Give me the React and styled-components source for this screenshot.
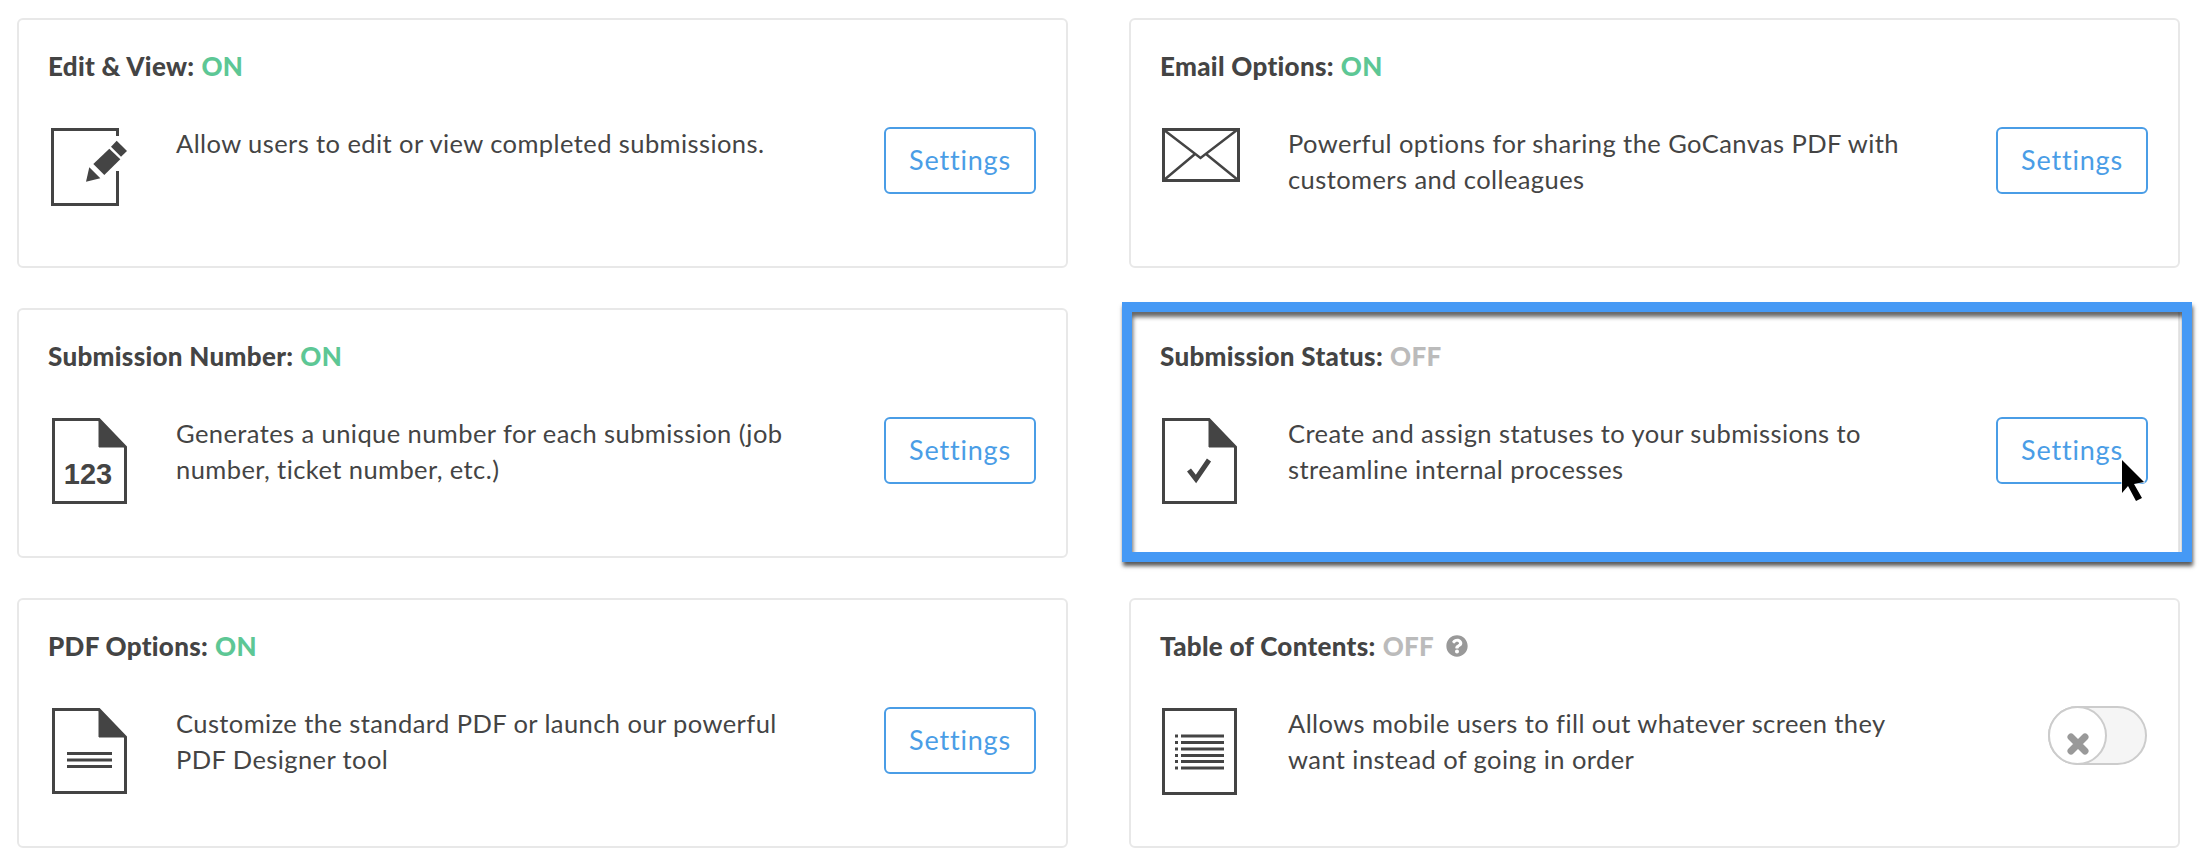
import styled, { createGlobalStyle } from "styled-components";
import { FaQuestionCircle } from "react-icons/fa";

const GlobalStyle = createGlobalStyle`
  html, body {
    margin: 0;
    padding: 0;
    background: #fff;
    font-family: "Lato", "Open Sans", sans-serif;
    color: #444;
  }
`;

const Page = styled.div`
  display: grid;
  grid-template-columns: 1051px 1051px;
  grid-auto-rows: 250px;
  column-gap: 61px;
  row-gap: 40px;
  padding: 18px 0 0 17px;
`;

const Card = styled.section`
  position: relative;
  box-sizing: border-box;
  border: 2px solid #e8e8e8;
  border-radius: 6px;
  padding: 34px 30px 0 29px;
  background: #fff;
`;

const Title = styled.h3`
  display: flex;
  align-items: center;
  gap: 7px;
  height: 24px;
  margin: 0 0 49px;
  font-size: 26px;
  letter-spacing: 0.3px;
  line-height: 24px;
  font-weight: 900;
  color: #444;
`;

const Status = styled.span`
  color: ${(p) => (p.$on ? "#5dc795" : "#bbb")};
`;

const Help = styled.span`
  display: inline-flex;
  margin-left: 5px;
  font-size: 22px;
  color: #999;
`;

const Row = styled.div`
  display: flex;
  align-items: flex-start;
`;

const IconSlot = styled.div`
  flex: 0 0 128px;
  padding: 1px 0 0 ${(p) => p.$inset || 3}px;
  box-sizing: border-box;
  svg {
    display: block;
  }
`;

const Text = styled.p`
  flex: 1;
  max-width: 625px;
  margin: -2px 0 0;
  font-size: 25.5px;
  letter-spacing: 0.42px;
  line-height: 36px;
  color: #444;
`;

const SettingsButton = styled.button`
  box-sizing: border-box;
  width: 152px;
  height: 67px;
  margin-left: auto;
  padding: 0 0 3px;
  background: #fff;
  border: 2px solid #4a9de6;
  border-radius: 6px;
  font-family: inherit;
  font-size: 27px;
  letter-spacing: 0.8px;
  color: #4a9de6;
  cursor: pointer;
`;

const Toggle = styled.div`
  display: flex;
  box-sizing: border-box;
  width: 99px;
  height: 59px;
  margin: -1px 1px 0 auto;
  background: #f5f5f5;
  border: 2px solid #ccc;
  border-radius: 30px;
`;

const Knob = styled.div`
  display: flex;
  align-items: center;
  justify-content: center;
  box-sizing: border-box;
  width: 59px;
  height: 59px;
  margin: -2px;
  padding-top: 16px;
  background: #fff;
  border: 2px solid #ccc;
  border-radius: 50%;
`;

const Highlight = styled.div`
  position: absolute;
  top: -8px;
  left: -9px;
  width: 1070px;
  height: 260px;
  box-sizing: border-box;
  border: 10px solid #4599f5;
  box-shadow: 1px 4px 4px rgba(0, 0, 0, 0.65),
    inset 1px 5px 4px rgba(0, 0, 0, 0.6);
  pointer-events: none;
`;

const Cursor = styled.svg`
  position: absolute;
  left: 991px;
  top: 150px;
  overflow: visible;
`;

const ink = "#444";

function FileIcon({ children }) {
  return (
    <svg width="75" height="86" viewBox="0 0 75 86">
      <path d="M1.5 1.5H47L73.5 29V84.5H1.5Z" fill="#fff" stroke={ink} strokeWidth="3" />
      <path d="M47 1.5L73.5 29H47Z" fill={ink} stroke={ink} strokeWidth="1" />
      {children}
    </svg>
  );
}

const EditIcon = () => (
  <svg width="78" height="80" viewBox="0 0 78 80">
    <path d="M66.5 8V1.5H1.5V76.5H66.5V43" fill="none" stroke={ink} strokeWidth="3" />
    <path d="M35 53.7L38.3 39.3L49.3 50.3Z" fill={ink} />
    <path d="M42.3 36L58.3 20.7L69.3 31.3L53.3 47Z" fill={ink} />
    <path d="M65.7 12.7L76 23L70 28.7L60 18.7Z" fill={ink} />
  </svg>
);

const MailIcon = () => (
  <svg width="78" height="54" viewBox="0 0 78 54">
    <rect x="1.5" y="1.5" width="75" height="51" fill="none" stroke={ink} strokeWidth="3" />
    <path d="M2 2L38.5 30L75 2M2 52L33 26M76 52L44 26" fill="none" stroke={ink} strokeWidth="2.5" />
  </svg>
);

const NumberIcon = () => (
  <FileIcon>
    <text
      x="36"
      y="66"
      textAnchor="middle"
      fontFamily="Liberation Sans, sans-serif"
      fontWeight="700"
      fontSize="29"
      fill={ink}
    >
      123
    </text>
  </FileIcon>
);

const CheckIcon = () => (
  <FileIcon>
    <path d="M27 52L34 61L47 42" fill="none" stroke={ink} strokeWidth="5" />
  </FileIcon>
);

const PdfIcon = () => (
  <FileIcon>
    <path d="M15 45.5H60M15 52H60M15 58.5H60" stroke={ink} strokeWidth="3" />
  </FileIcon>
);

const TocIcon = () => (
  <svg width="75" height="87" viewBox="0 0 75 87">
    <rect x="1.5" y="1.5" width="72" height="84" fill="none" stroke={ink} strokeWidth="3" />
    {[28, 34.5, 41, 47.5, 53.5, 60].map((y) => (
      <g key={y}>
        <rect x="13" y={y - 1.5} width="3" height="3" fill={ink} />
        <rect x="19" y={y - 1.5} width="43" height="3" fill={ink} />
      </g>
    ))}
  </svg>
);

const items = [
  {
    name: "Edit & View:",
    on: true,
    text: "Allow users to edit or view completed submissions.",
    icon: <EditIcon />,
  },
  {
    name: "Email Options:",
    on: true,
    text: "Powerful options for sharing the GoCanvas PDF with customers and colleagues",
    icon: <MailIcon />,
    inset: 2,
  },
  {
    name: "Submission Number:",
    on: true,
    text: "Generates a unique number for each submission (job number, ticket number, etc.)",
    icon: <NumberIcon />,
    inset: 4,
  },
  {
    name: "Submission Status:",
    on: false,
    text: "Create and assign statuses to your submissions to streamline internal processes",
    icon: <CheckIcon />,
    inset: 2,
    highlighted: true,
  },
  {
    name: "PDF Options:",
    on: true,
    text: "Customize the standard PDF or launch our powerful PDF Designer tool",
    icon: <PdfIcon />,
    inset: 4,
  },
  {
    name: "Table of Contents:",
    on: false,
    text: "Allows mobile users to fill out whatever screen they want instead of going in order",
    icon: <TocIcon />,
    inset: 2,
    toggle: true,
  },
];

export default function App() {
  return (
    <Page>
      <GlobalStyle />
      {items.map((item) => (
        <Card key={item.name}>
          <Title>
            {item.name} <Status $on={item.on}>{item.on ? "ON" : "OFF"}</Status>
            {item.toggle && (
              <Help>
                <FaQuestionCircle />
              </Help>
            )}
          </Title>
          <Row>
            <IconSlot $inset={item.inset}>{item.icon}</IconSlot>
            <Text>{item.text}</Text>
            {item.toggle ? (
              <Toggle>
                <Knob>
                  <svg width="24" height="24" viewBox="0 0 24 24">
                    <path d="M5 5L19 19M19 5L5 19" stroke="#999" strokeWidth="7" strokeLinecap="round" />
                  </svg>
                </Knob>
              </Toggle>
            ) : (
              <SettingsButton type="button">Settings</SettingsButton>
            )}
          </Row>
          {item.highlighted && (
            <>
              <Highlight />
              <Cursor width="24" height="42" viewBox="0 0 24 42">
                <path
                  d="M0 0L22 22L12 24L20 38L14 41L6 26L0 33Z"
                  fill="#000"
                  stroke="#fff"
                  strokeOpacity="0.8"
                  strokeWidth="1.5"
                  paintOrder="stroke"
                />
              </Cursor>
            </>
          )}
        </Card>
      ))}
    </Page>
  );
}
